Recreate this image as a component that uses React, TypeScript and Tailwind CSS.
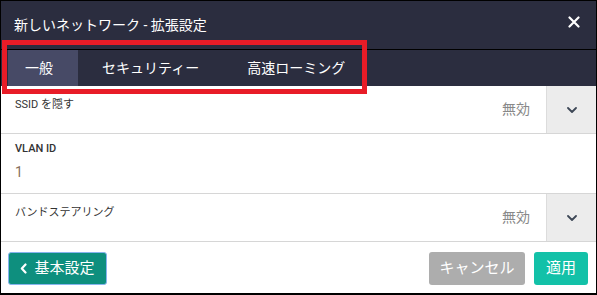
import React from 'react';

const font = { fontFamily: '"Roboto", "Noto Sans CJK JP", sans-serif' };

function Chevron() {
  return (
    <svg width="10" height="6" viewBox="0 0 10 6" fill="none">
      <path d="M1 1l4 4 4-4" stroke="#3d4756" strokeWidth="1.8" strokeLinecap="round" strokeLinejoin="round" />
    </svg>
  );
}

function SelectRow({ label }: { label: string }) {
  return (
    <div className="h-[48px] flex border-b border-[#d6d6d6]">
      <div className="flex-1 pl-[14px] pt-[11px] text-[11px] leading-[16px] text-[#333]">{label}</div>
      <div className="flex items-center pr-[16px] text-[14px] text-[#888]">無効</div>
      <div className="w-[50px] flex items-center justify-center bg-[#ececec] border-l border-[#dcdcdc]">
        <Chevron />
      </div>
    </div>
  );
}

export default function App() {
  return (
    <div style={font} className="relative w-[597px] h-[295px] flex flex-col bg-white border border-black border-b-2 overflow-hidden">
      {/* header */}
      <div className="h-[48px] flex items-center justify-between pl-[13px] pr-[16px] bg-[#2b2d3f] text-white">
        <span className="text-[14px]">新しいネットワーク - 拡張設定</span>
        <svg width="12" height="12" viewBox="0 0 12 12" className="mb-[7px]">
          <path d="M1.5 1.5l9 9M10.5 1.5l-9 9" stroke="white" strokeWidth="2.2" strokeLinecap="round" />
        </svg>
      </div>
      <div className="h-px bg-black" />

      {/* tabs */}
      <div className="h-[36px] flex pl-[7px] bg-[#2b2d3f] text-white text-[14px]">
        <div className="flex items-center pl-[17px] pr-[25px] bg-[#474a66]">一般</div>
        <div className="flex items-center px-[24px]">セキュリティー</div>
        <div className="flex items-center px-[24px]">高速ローミング</div>
      </div>

      {/* rows */}
      <SelectRow label="SSID を隠す" />
      <div className="h-[60px] flex flex-col pl-[14px] pt-[7px] border-b border-[#d6d6d6]">
        <div className="text-[11px] leading-[16px] font-medium text-[#333]">VLAN ID</div>
        <div className="mt-[5px] text-[14px] leading-[20px] text-[#86705c]">1</div>
      </div>
      <SelectRow label="バンドステアリング" />

      {/* footer */}
      <div className="flex-1 flex items-start justify-between pl-[7px] pr-[8px] pt-[10px]">
        <button className="h-[33px] w-[99px] flex items-center justify-center gap-[7px] rounded-[3px] bg-[#0e8f7e] border border-[#86b4ee] text-white text-[15px]">
          <svg width="7" height="11" viewBox="0 0 7 11" fill="none">
            <path d="M5.5 1.5L1.8 5.5l3.7 4" stroke="white" strokeWidth="2.2" strokeLinecap="round" strokeLinejoin="round" />
          </svg>
          基本設定
        </button>
        <div className="flex gap-[9px]">
          <button className="h-[33px] w-[96px] rounded-[3px] bg-[#adadad] text-white text-[15px]">キャンセル</button>
          <button className="h-[33px] w-[54px] rounded-[3px] bg-[#13c1a8] text-white text-[15px]">適用</button>
        </div>
      </div>

      {/* annotation */}
      <div className="absolute left-[1px] top-[39px] w-[365px] h-[54px] border-[5px] border-[#e81c27] pointer-events-none" />
    </div>
  );
}
